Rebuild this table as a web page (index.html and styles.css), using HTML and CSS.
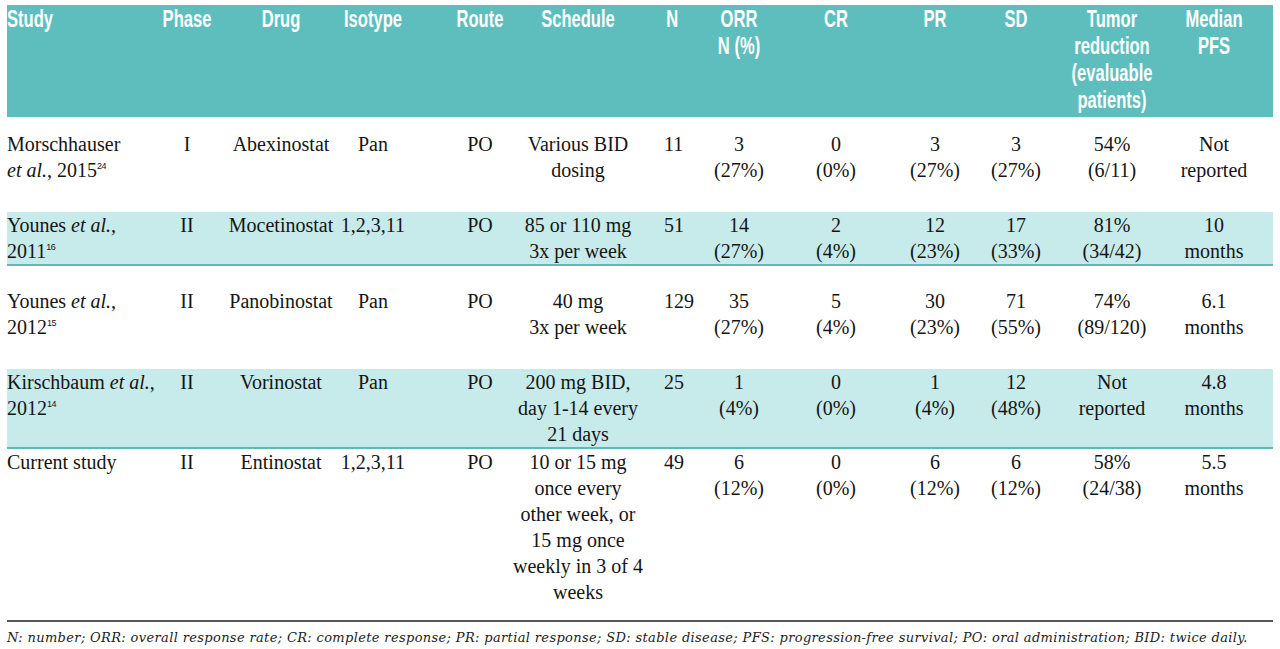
FILE: index.html
```html
<!DOCTYPE html>
<html>
<head>
<meta charset="utf-8">
<link rel="stylesheet" href="styles.css">
</head>
<body>
<div class="page">
  <div class="tbl">
    <div class="row head">
      <div class="study">Study</div>
      <div class="phase">Phase</div>
      <div class="drug">Drug</div>
      <div class="iso">Isotype</div>
      <div class="route">Route</div>
      <div class="sched">Schedule</div>
      <div class="n">N</div>
      <div class="orr">ORR<br>N (%)</div>
      <div class="cr">CR</div>
      <div class="pr">PR</div>
      <div class="sd">SD</div>
      <div class="tumor">Tumor<br>reduction<br>(evaluable<br>patients)</div>
      <div class="pfs">Median<br>PFS</div>
    </div>
    <div class="row body r1">
      <div class="study">Morschhauser<br><i>et al.</i>, 2015<sup>24</sup></div>
      <div class="phase">I</div>
      <div class="drug">Abexinostat</div>
      <div class="iso">Pan</div>
      <div class="route">PO</div>
      <div class="sched">Various BID<br>dosing</div>
      <div class="n">11</div>
      <div class="orr">3<br>(27%)</div>
      <div class="cr">0<br>(0%)</div>
      <div class="pr">3<br>(27%)</div>
      <div class="sd">3<br>(27%)</div>
      <div class="tumor">54%<br>(6/11)</div>
      <div class="pfs">Not<br>reported</div>
    </div>
    <div class="row body shade r2">
      <div class="study">Younes <i>et al.</i>,<br>2011<sup>16</sup></div>
      <div class="phase">II</div>
      <div class="drug">Mocetinostat</div>
      <div class="iso">1,2,3,11</div>
      <div class="route">PO</div>
      <div class="sched">85 or 110 mg<br>3x per week</div>
      <div class="n">51</div>
      <div class="orr">14<br>(27%)</div>
      <div class="cr">2<br>(4%)</div>
      <div class="pr">12<br>(23%)</div>
      <div class="sd">17<br>(33%)</div>
      <div class="tumor">81%<br>(34/42)</div>
      <div class="pfs">10<br>months</div>
    </div>
    <div class="row body r3">
      <div class="study">Younes <i>et al.</i>,<br>2012<sup>15</sup></div>
      <div class="phase">II</div>
      <div class="drug">Panobinostat</div>
      <div class="iso">Pan</div>
      <div class="route">PO</div>
      <div class="sched">40 mg<br>3x per week</div>
      <div class="n">129</div>
      <div class="orr">35<br>(27%)</div>
      <div class="cr">5<br>(4%)</div>
      <div class="pr">30<br>(23%)</div>
      <div class="sd">71<br>(55%)</div>
      <div class="tumor">74%<br>(89/120)</div>
      <div class="pfs">6.1<br>months</div>
    </div>
    <div class="row body shade r4">
      <div class="study">Kirschbaum <i>et al.</i>,<br>2012<sup>14</sup></div>
      <div class="phase">II</div>
      <div class="drug">Vorinostat</div>
      <div class="iso">Pan</div>
      <div class="route">PO</div>
      <div class="sched">200 mg BID,<br>day 1-14 every<br>21 days</div>
      <div class="n">25</div>
      <div class="orr">1<br>(4%)</div>
      <div class="cr">0<br>(0%)</div>
      <div class="pr">1<br>(4%)</div>
      <div class="sd">12<br>(48%)</div>
      <div class="tumor">Not<br>reported</div>
      <div class="pfs">4.8<br>months</div>
    </div>
    <div class="row body r5">
      <div class="study">Current study</div>
      <div class="phase">II</div>
      <div class="drug">Entinostat</div>
      <div class="iso">1,2,3,11</div>
      <div class="route">PO</div>
      <div class="sched">10 or 15 mg<br>once every<br>other week, or<br>15 mg once<br>weekly in 3 of 4<br>weeks</div>
      <div class="n">49</div>
      <div class="orr">6<br>(12%)</div>
      <div class="cr">0<br>(0%)</div>
      <div class="pr">6<br>(12%)</div>
      <div class="sd">6<br>(12%)</div>
      <div class="tumor">58%<br>(24/38)</div>
      <div class="pfs">5.5<br>months</div>
    </div>
  </div>
  <p class="foot">N: number; ORR: overall response rate; CR: complete response; PR: partial response; SD: stable disease; PFS: progression-free survival; PO: oral administration; BID: twice daily.</p>
</div>
</body>
</html>
```

FILE: styles.css
```css
html, body {
  margin: 0;
  padding: 0;
  background: #ffffff;
}

.page {
  padding: 5px 7px 0 7px;
}

.tbl {
  width: 1266px;
}

.row {
  display: grid;
  grid-template-columns: 150px 5px 50px 14px 110px 3px 68px 43px 60px 2px 132px 20px 43px 2px 60px 37px 60px 39px 60px 21px 60px 6px 120px 2px 80px 19px;
  white-space: nowrap;
  text-align: center;
}

.row > div { grid-row: 1; }

.study { grid-column: 1; text-align: left; }
.phase { grid-column: 3; }
.drug { grid-column: 5; }
.iso { grid-column: 7; }
.route { grid-column: 9; }
.sched { grid-column: 11; }
.n { grid-column: 13; text-align: left; }
.orr { grid-column: 15; }
.cr { grid-column: 17; }
.pr { grid-column: 19; }
.sd { grid-column: 21; }
.tumor { grid-column: 23; }
.pfs { grid-column: 25; }

.head {
  background: #5ebebe;
  color: #ffffff;
  font-family: "Liberation Sans", "Arial", sans-serif;
  font-weight: bold;
  font-size: 23px;
  line-height: 27px;
  padding: 1px 0 3px;
}

.head > div {
  margin: 0 -40px;
  transform: scaleX(0.72);
  transform-origin: 50% 50%;
}

.head > .study,
.head > .n {
  margin: 0 -40px 0 0;
  transform-origin: 0 50%;
}

.head > .n { padding-left: 3px; }

.body {
  font-family: "Liberation Serif", serif;
  font-size: 20px;
  line-height: 26px;
  color: #151515;
}

.body i { font-style: italic; }

.body sup {
  font-family: "Liberation Sans", sans-serif;
  font-size: 9px;
  line-height: 0;
  vertical-align: 8px;
  letter-spacing: -0.5px;
}

.shade {
  background: #c7eaea;
  border-bottom: 2px solid #5cbaba;
}

.r1 { padding: 14px 0 29px; }
.r2 { padding: 0; }
.r3 { padding: 22px 0 29px; }
.r4 { padding: 0; }
.r5 { padding: 0 0 15px; }

.foot {
  margin: 0;
  width: 1266px;
  border-top: 2px solid #555555;
  padding-top: 8px;
  font-family: "DejaVu Serif", serif;
  font-style: italic;
  font-size: 13px;
  letter-spacing: 0.35px;
  line-height: 16px;
  color: #222222;
  white-space: nowrap;
}
```
